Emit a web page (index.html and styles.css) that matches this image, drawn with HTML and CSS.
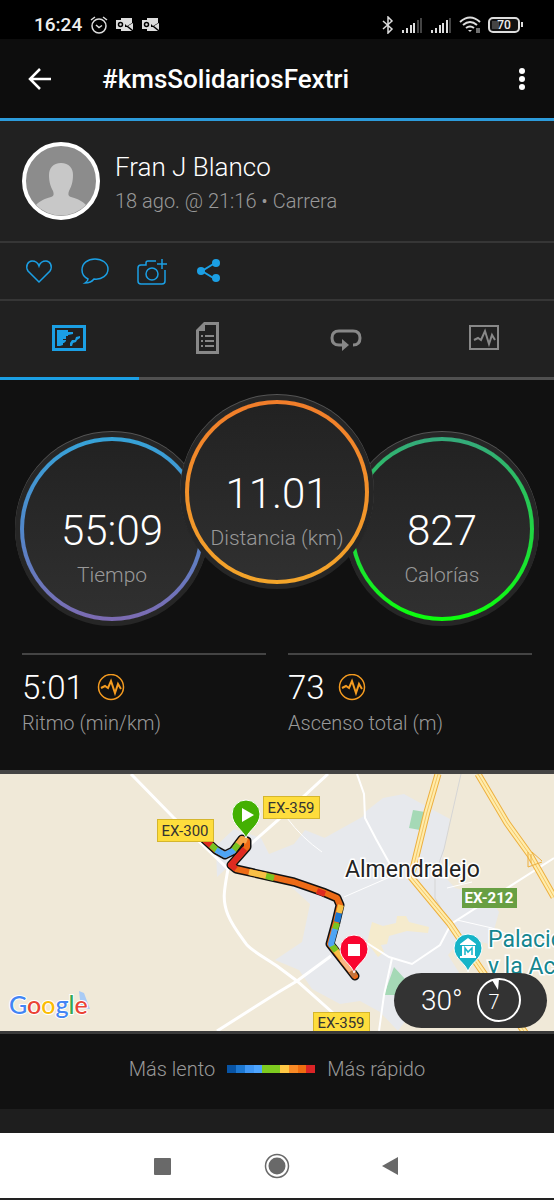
FILE: index.html
```html
<!DOCTYPE html>
<html lang="es">
<head>
    <meta charset="UTF-8">
    <meta name="viewport" content="width=device-width, initial-scale=1.0">
    <title>#kmsSolidariosFextri</title>
    <link rel="stylesheet" href="styles.css">
</head>
<body>
    <!-- Status bar -->
    <div class="status-bar">
        <span class="clock">16:24</span>
        <svg class="alarm" width="18" height="18" viewBox="0 0 18 18" fill="none" stroke="#ddd" stroke-width="1.5">
            <circle cx="9" cy="10" r="7"/>
            <path d="M1 4l4-3M17 4l-4-3M6 9l3 2.500 3-2"/>
        </svg>
        <svg class="mail" width="18" height="14" viewBox="0 0 18 14">
            <path d="M5 0h11v5l-5 3-2-2V3H5zM5 11h4V9l2 0 5 4H5zM12 8l5-3v7z" fill="#ddd"/>
            <path d="M0 2h9v9H0z" fill="#ddd"/>
            <circle cx="4.500" cy="6.500" r="2" fill="none" stroke="#000" stroke-width="1.5"/>
        </svg>
        <svg class="mail" width="18" height="14" viewBox="0 0 18 14">
            <path d="M5 0h11v5l-5 3-2-2V3H5zM5 11h4V9l2 0 5 4H5zM12 8l5-3v7z" fill="#ddd"/>
            <path d="M0 2h9v9H0z" fill="#ddd"/>
            <circle cx="4.500" cy="6.500" r="2" fill="none" stroke="#000" stroke-width="1.5"/>
        </svg>
        <div class="system-icons">
            <svg width="12" height="18" viewBox="0 0 12 18" fill="none" stroke="#ddd" stroke-width="1.5">
                <path d="M1 5l9 8-4 4V1l4 4-9 8"/>
            </svg>
            <svg width="22" height="16" viewBox="0 0 22 16" stroke="#ddd" stroke-width="2">
                <path d="M2 16v-3M6 16v-5M10 16V8M13 16V6"/>
                <path d="M17 16V3M20 16V1" stroke="#444"/>
            </svg>
            <svg width="22" height="16" viewBox="0 0 22 16" stroke="#ddd" stroke-width="2">
                <path d="M2 16v-3M6 16v-5M10 16V8M13 16V6M17 16V3"/>
                <path d="M20 16V1" stroke="#444"/>
            </svg>
            <svg width="22" height="18" viewBox="0 0 22 18" fill="none" stroke="#ddd" stroke-width="2">
                <path d="M1 6q10-9 20 0M4 9q7-6 14 0M7 12q4-3 8 0"/>
                <path d="M9 14h4l-2 2z" fill="#ddd" stroke="none"/>
                <path d="M18 12v5M20 12v5" stroke-width="1"/>
            </svg>
            <svg width="36" height="18" viewBox="0 0 36 18">
                <rect x="1" y="2" width="30" height="14" rx="4" fill="#111" stroke="#ddd" stroke-width="2"/>
                <path d="M4 5h7v8H4z" fill="#444"/>
                <path d="M34 6v5" stroke="#ddd" stroke-width="2"/>
                <text class="battery-text" x="16" y="13" text-anchor="middle">70</text>
            </svg>
        </div>
    </div>

    <!-- Title bar -->
    <header class="app-bar">
        <button class="icon-btn" aria-label="Atrás">
            <svg width="24" height="24" viewBox="0 0 24 24" fill="none" stroke="#fff" stroke-width="2.500">
                <path d="M23 12H2M12 2L2 12l10 10"/>
            </svg>
        </button>
        <h1>#kmsSolidariosFextri</h1>
        <button class="icon-btn" aria-label="Más opciones">
            <svg width="8" height="24" viewBox="0 0 8 24" fill="#fff">
                <circle cx="4" cy="4" r="3"/><circle cx="4" cy="12" r="3"/><circle cx="4" cy="20" r="3"/>
            </svg>
        </button>
    </header>

    <main>
        <section class="profile">
            <svg class="avatar" width="78" height="78" viewBox="0 0 78 78">
                <circle cx="39" cy="39" r="37" fill="#8c8c8c" stroke="#fff" stroke-width="4"/>
                <path d="M39 21c8 0 12 5 12 12 0 8-2 12-4 16-1 3-1 5 2 6 7 2 11 4 15 8a35 35 0 0 1-50 0c4-4 8-6 15-8 3-1 3-3 2-6-2-4-4-8-4-16 0-7 4-12 12-12z" fill="#c8c8c8"/>
            </svg>
            <div>
                <h2>Fran J Blanco</h2>
                <p>18 ago. @ 21:16 • Carrera</p>
            </div>
        </section>

        <div class="actions">
            <button aria-label="Me gusta">
                <svg width="30" height="30" viewBox="0 0 30 30"><path d="M15 26L4 15C1 10 4 5 8 5c4 0 6 2 7 5 1-3 3-5 7-5 4 0 7 5 4 10z"/></svg>
            </button>
            <button aria-label="Comentar">
                <svg width="30" height="30" viewBox="0 0 30 30"><path d="M8 23C4 21 2 18 2 14 2 7 8 3 15 3s13 4 13 10-6 11-14 10q-3 4-9 4 3-2 3-4z"/></svg>
            </button>
            <button aria-label="Añadir foto">
                <svg width="32" height="30" viewBox="0 0 32 30"><path d="M20 5h-8q-2 0-2 2v2H5q-3 0-3 3v13q0 3 3 3h21q3 0 3-3V14M31 8H21M26 3v10"/><circle cx="16" cy="18" r="6"/></svg>
            </button>
            <button aria-label="Compartir">
                <svg width="30" height="30" viewBox="0 0 30 30"><path d="M21 7L8 15l13 8" stroke-width="2"/><g fill="#1b9fe4" stroke="none"><circle cx="22" cy="7" r="4"/><circle cx="7" cy="15" r="4"/><circle cx="22" cy="22" r="4"/></g></svg>
            </button>
        </div>

        <nav class="tabs">
            <button class="active" aria-label="Mapa">
                <svg width="34" height="32" viewBox="0 0 34 32">
                    <path d="M0 2h34v26H0zM3 5v20h28V5z" fill="#1b9fe4" fill-rule="evenodd"/>
                    <path d="M5 7h11v2h5v2l-5 1v1h-2v3h-3v1h3v1l-2 2h-1v2l-3 1H5zM18 23v-3l2-3h3l1-3 4-1v2l-3 2-1 2-3 1-1 3z" fill="#1b9fe4"/>
                </svg>
            </button>
            <button aria-label="Detalles">
                <svg width="24" height="36" viewBox="0 0 24 36">
                    <path d="M8 1h15v32H0V9zM9 4v6H3v20h17V4z" fill="#888" fill-rule="evenodd"/>
                    <path d="M9 3v7H2z" fill="#888"/>
                    <path d="M5 15h2M9 15h9M5 20h2M9 20h9M5 25h2M9 25h9" stroke="#888" stroke-width="2"/>
                </svg>
            </button>
            <button aria-label="Vueltas">
                <svg width="34" height="34" viewBox="0 0 34 34">
                    <path d="M24 23c5 0 7-3 7-7s-2-7-7-7H10c-5 0-7 3-7 7s2 7 7 7h4" fill="none" stroke="#888" stroke-width="3"/>
                    <path d="M13 17l7 6-7 6z" fill="#888"/>
                </svg>
            </button>
            <button aria-label="Gráficos">
                <svg width="32" height="34" viewBox="0 0 32 34" fill="none" stroke="#888">
                    <rect x="1" y="4" width="28" height="23" stroke-width="2"/>
                    <path d="M5 18l4-2 3 2 4-9 4 13 3-9 3 5" stroke-width="2"/>
                </svg>
            </button>
        </nav>

        <section class="gauges">
            <div class="gauge time"><strong>55:09</strong><span>Tiempo</span></div>
            <div class="gauge distance"><strong>11.01</strong><span>Distancia (km)</span></div>
            <div class="gauge calories"><strong>827</strong><span>Calorías</span></div>
        </section>

        <section class="stats">
            <div class="stat">
                <div class="stat-value">
                    <strong>5:01</strong>
                    <svg width="28" height="28" viewBox="0 0 28 28"><circle cx="14" cy="13" r="12.500"/><path d="M4 14l4-2 3 2 3-7 4 12 3-9 3 5" stroke-width="2"/></svg>
                </div>
                <span>Ritmo (min/km)</span>
            </div>
            <div class="stat">
                <div class="stat-value">
                    <strong>73</strong>
                    <svg width="28" height="28" viewBox="0 0 28 28"><circle cx="14" cy="13" r="12.500"/><path d="M4 14l4-2 3 2 3-7 4 12 3-9 3 5" stroke-width="2"/></svg>
                </div>
                <span>Ascenso total (m)</span>
            </div>
        </section>

        <section class="map">
            <svg class="map-canvas" viewBox="0 0 554 257" preserveAspectRatio="xMidYMid slice">
                <rect width="554" height="257" fill="#f0e9d8"/>
                <!-- built-up area -->
                <g fill="#e7e9ed">
                    <path d="M365 38l18-14 21-4 20 11 26 14-10 52 15 17 34 9 10 15-9 32-28-6-14 17 12 19-16 14-20-4-12 28-14 19-18-19-20-11-20 3-28-15-13-19-24-10 27-18 8-38-24-22-26-3-30-14-13 12-1-31 18-17 27 9 8 16 25-10 11-14 20 8 17-2 17-12z"/>
                    <path d="M310 72l54-30 8 55-42 30-28-20z"/>
                    <path d="M332 125l40-35 28 20 10 70-30 8-45-25z"/>
                </g>
                <path d="M372 148l11 4 13-3 1-7h9l3 6 20 5-1 6-21-2-18 5-2 8-6 1 3 7-6 5-6-8-5-5 2-10z" fill="#f5ebcd"/>
                <path d="M413 36l12 2-5 18-11-2zM394 193l11 12-2 16h-19z" fill="#a5d9b6"/>
                <path d="M461 0l-17 75-9 25v24l20 34" fill="none" stroke="#d5d5d5"/>
                <g fill="none" stroke="#fff" stroke-width="3">
                    <path d="M131 0l42 43 32 30 23 22c-4 22-6 31 0 46 5 12 14 23 19 30 8 8 20 14 30 21l20 15 36 32M217 257l60-38 20-12 34-25M328 0l-51 47-32 28"/>
                    <path d="M357 0l7 20 1 24 11 21 15 27M554 84l-103 66-11 21-28 19-23-7-22-14M392 184l-8 37-5 36" stroke-width="2"/>
                    <path d="M287 44q15 20 35 34M344 123l46-20M457 146l35 8 20 8M447 114l25-6" stroke-width="1"/>
                </g>
                <!-- main roads -->
                <g fill="none" stroke-linejoin="round">
                    <path d="M438 0l-11 38-16 65 39 47 30 44 46 66M478 0l29 49 23 32 24 42" stroke="#edaf3e" stroke-width="7"/>
                    <path d="M438 0l-11 38-16 65 39 47 30 44 46 66M478 0l29 49 23 32 24 42" stroke="#ffecab" stroke-width="5"/>
                    <path d="M438 0l-11 38-16 65 39 47 30 44 46 66M478 0l29 49 23 32 24 42" stroke="#f3c566"/>
                    <path d="M528 78v15l14-5M531 80v9M532 78l10 9" stroke="#edaf3e"/>
                </g>
                <!-- route, coloured by pace -->
                <g fill="none" stroke-linejoin="round" stroke-linecap="round">
                    <path d="M204 65l12 11 9 5 8-4 9-12 5 2v6l-16 18 5 4 58 13 29 10 14 6 3 7-4 17-6 22 25 32" stroke="#111" stroke-width="9"/>
                    <path d="M204 65l12 11 9 5 8-4 9-12 5 2v6l-16 18 5 4 58 13 29 10 14 6 3 7-4 17-6 22 25 32" stroke="#ed6b16" stroke-width="6"/>
                    <g stroke-width="6" stroke-linecap="butt">
                        <path d="M204 65l8 7M245 75l-14 16 5 4" stroke="#df2a20"/>
                        <path d="M211 71l7 6M233 77l6-8" stroke="#77c422"/>
                        <path d="M216 76l9 5 8-4 1-1" stroke="#4ea5f5"/>
                        <path d="M238 70l4-5 5 2" stroke="#f5a54a"/>
                        <path d="M317 117l8 3" stroke="#df2a20"/>
                        <path d="M249 98l18 4M341 131l-2 8M334 174l10 13" stroke="#f8c046"/>
                        <path d="M266 102l8 2M337 149l-2 7M331 170l5 7" stroke="#77c422"/>
                        <path d="M339 139l-2 9" stroke="#1d78d2"/>
                        <path d="M335 155l-4 15 1 2" stroke="#4ea5f5"/>
                        <path d="M342 185l12 15" stroke="#f8b783"/>
                        <path d="M351 197l4 5" stroke="#c4753d"/>
                    </g>
                </g>
                <!-- road signs -->
                <g fill="#fedd3c" stroke="#d5b62d">
                    <rect x="157.500" y="45.500" width="56" height="22"/>
                    <rect x="263.500" y="22.500" width="56" height="22"/>
                    <rect x="313.500" y="238.500" width="56" height="22"/>
                </g>
                <rect x="462" y="114" width="55" height="20" fill="#689f43"/>
                <g class="sign" text-anchor="middle">
                    <text x="185" y="62">EX-300</text>
                    <text x="291" y="39">EX-359</text>
                    <text x="341" y="254">EX-359</text>
                    <text class="sign-green" x="489" y="129">EX-212</text>
                </g>
                <text class="city" x="345" y="103">Almendralejo</text>
                <g class="place">
                    <text x="488" y="173">Palacio</text>
                    <text x="488" y="200">y la Aca</text>
                </g>
                <!-- pins -->
                <path d="M246 64c-3-8-14-13-14-24a14 14 0 0 1 28 0c0 11-11 16-14 24z" fill="#43b002" stroke="#fff"/>
                <path d="M242 34l12 7-12 7z" fill="#fff"/>
                <path d="M354 199c-2-9-14-13-14-24a14 14 0 0 1 28 0c0 11-12 15-14 24z" fill="#f9052f" stroke="#fff"/>
                <path d="M348 170h12v12h-12z" fill="#fff"/>
                <path d="M468 198c-2-9-14-13-14-24a14 14 0 0 1 28 0c0 11-12 15-14 24z" fill="#16b4c8" stroke="#fff"/>
                <path d="M460 170l8-6 8 6v1h-16zM462 172h13v10h-13zM460 182h16v2h-16z" fill="#fff"/>
                <path d="M465 181v-7l3 4 4-4v7" fill="none" stroke="#16b4c8" stroke-width="1.5"/>
                <path d="M79 217l5 2 6 16-9-1z" fill="#a9cbf5"/>
                <text class="google" x="9" y="240"><tspan fill="#4285f4">G</tspan><tspan fill="#ea4335">o</tspan><tspan fill="#fbbc05">o</tspan><tspan fill="#4285f4">g</tspan><tspan fill="#34a853">l</tspan><tspan fill="#ea4335">e</tspan></text>
            </svg>
            <div class="weather">
                <span>30°</span>
                <svg width="46" height="46" viewBox="0 0 46 46">
                    <circle cx="23" cy="22" r="21" fill="none" stroke="#fff" stroke-width="2"/>
                    <path d="M16 2l7-1-1 11z" fill="#fff"/>
                    <text x="18" y="31" text-anchor="middle">7</text>
                </svg>
            </div>
        </section>

        <div class="legend">
            <span>Más lento</span>
            <div class="scale">
                <i class="c1"></i><i class="c2"></i><i class="c3"></i><i class="c4"></i><i class="c5"></i>
                <i class="c5"></i><i class="c6"></i><i class="c7"></i><i class="c8"></i><i class="c9"></i>
            </div>
            <span>Más rápido</span>
        </div>
    </main>

    <!-- Android navigation -->
    <footer class="nav-bar">
        <button aria-label="Recientes">
            <svg width="26" height="26" viewBox="0 0 26 26"><rect x="4" y="5" width="17" height="17" rx="1" fill="#696969"/></svg>
        </button>
        <button aria-label="Inicio">
            <svg width="26" height="26" viewBox="0 0 26 26"><circle cx="13" cy="13" r="8.500" fill="#696969"/><circle cx="13" cy="13" r="11.500" fill="none" stroke="#696969" stroke-width="1.500"/></svg>
        </button>
        <button aria-label="Volver">
            <svg width="26" height="26" viewBox="0 0 26 26"><path d="M4 13l16-9v18z" fill="#696969"/></svg>
        </button>
    </footer>
</body>
</html>
```

FILE: styles.css
```css
/* General Styles */
* {
    box-sizing: border-box;
}

body {
    margin: 0;
    font-family: Roboto, sans-serif;
    font-weight: 300;
    background: #111;
    color: #fff;
}

h1, h2, p {
    margin: 0;
}

strong {
    font-weight: 300;
}

svg {
    display: block;
    flex-shrink: 0;
}

button {
    display: flex;
    align-items: center;
    justify-content: center;
    padding: 0;
    border: none;
    background: none;
    cursor: pointer;
}

/* Status bar */
.status-bar {
    display: flex;
    align-items: center;
    gap: 8px;
    height: 39px;
    padding: 10px 30px 0 34px;
    background: #000;
}

.clock {
    font-size: 19px;
    font-weight: 500;
    color: #eee;
}

.system-icons {
    display: flex;
    align-items: center;
    gap: 7px;
    margin-left: auto;
}

.battery-text {
    font-size: 12px;
    font-weight: 500;
    fill: #eee;
}

/* Title bar */
.app-bar {
    display: flex;
    align-items: center;
    height: 82px;
    padding: 0 28px;
    background: #0d0d0d;
    border-bottom: 3px solid #2c9bdb;
}

.app-bar h1 {
    flex: 1;
    margin-left: 50px;
    font-size: 26px;
    font-weight: 500;
}

/* Profile */
.profile {
    display: flex;
    align-items: center;
    gap: 15px;
    height: 122px;
    padding: 0 22px;
    background: #212121;
    border-bottom: 2px solid #363636;
}

.profile h2 {
    margin-top: 3px;
    font-size: 26px;
    line-height: 34px;
    font-weight: 300;
}

.profile p {
    margin-top: 3px;
    font-size: 20px;
    line-height: 28px;
    color: #999;
}

.actions {
    display: flex;
    gap: 26px;
    height: 58px;
    padding: 0 24px;
    background: #212121;
    border-bottom: 2px solid #363636;
}

.actions svg {
    fill: none;
    stroke: #1b9fe4;
    stroke-width: 1.5;
}

/* Tabs */
.tabs {
    display: grid;
    grid-template-columns: repeat(4, 1fr);
    height: 79px;
    background: #212121;
}

.tabs button {
    border-bottom: 3px solid #505050;
}

.tabs .active {
    border-bottom-color: #1b9fe4;
}

/* Gauges */
.gauges {
    display: flex;
    justify-content: center;
    align-items: flex-end;
    padding: 20px 0 32px;
}

.gauge {
    display: flex;
    flex-direction: column;
    align-items: center;
    width: 184px;
    height: 184px;
    padding-top: 64px;
    border: 4px solid transparent;
    border-radius: 50%;
    box-shadow: 0 0 0 5px #262626, 0 -1px 0 5px #555;
}

.gauge strong {
    font-size: 42px;
    line-height: 52px;
}

.gauge span {
    font-size: 21px;
    line-height: 36px;
    color: #999;
    white-space: nowrap;
}

.time {
    background: linear-gradient(#222, #303030) padding-box, linear-gradient(#36a3d8, #5187ca 50%, #7d6bb2) border-box;
}

.distance {
    z-index: 1;
    margin: 0 -19px 37px;
    background: linear-gradient(#222, #303030) padding-box, linear-gradient(#f17d2a, #f3a52a) border-box;
}

.calories {
    background: linear-gradient(#222, #303030) padding-box, linear-gradient(#35aa7c, #0cff0c) border-box;
}

/* Stats */
.stats {
    display: grid;
    grid-template-columns: 1fr 1fr;
    gap: 22px;
    padding: 0 22px 33px;
}

.stat {
    padding-top: 13px;
    border-top: 2px solid #444;
    font-size: 20px;
    line-height: 28px;
    color: #999;
}

.stat-value {
    display: flex;
    align-items: center;
    gap: 13px;
    margin-bottom: 1px;
    font-size: 33px;
    line-height: 40px;
    color: #fff;
}

.stat-value svg {
    fill: none;
    stroke: #f49b20;
    stroke-width: 1.5;
}

/* Map */
.map {
    position: relative;
    border-top: 4px solid #444;
    border-bottom: 3px solid #3a3a3a;
}

.map-canvas {
    width: 100%;
    height: 257px;
}

.sign {
    font-size: 15px;
    font-weight: 400;
    fill: #333;
}

.sign-green {
    font-weight: 700;
    fill: #fff;
}

.city,
.place {
    font-size: 23px;
    font-weight: 400;
    fill: #222;
    stroke: #fff;
    stroke-width: 3px;
    paint-order: stroke;
}

.place {
    fill: #15868f;
}

.google {
    font-family: Lato, sans-serif;
    font-size: 25px;
    font-weight: 500;
    stroke: #fff;
    stroke-width: 2px;
    paint-order: stroke;
}

.weather {
    position: absolute;
    right: 7px;
    bottom: 3px;
    display: flex;
    align-items: center;
    justify-content: space-between;
    width: 153px;
    height: 55px;
    padding: 0 25px 0 27px;
    border-radius: 28px;
    background: #333;
    font-size: 28px;
}

.weather text {
    font-size: 20px;
    fill: #fff;
}

/* Pace legend */
.legend {
    display: flex;
    align-items: center;
    justify-content: center;
    gap: 12px;
    height: 75px;
    padding-bottom: 6px;
    font-size: 20px;
    color: #999;
}

.scale {
    display: flex;
    width: 88px;
    height: 8px;
}

.scale i {
    flex: 1;
}

.c1 { background: #0854a5; }
.c2 { background: #1d78d2; }
.c3 { background: #3f97f5; }
.c4 { background: #4ea5ff; }
.c5 { background: #7ecb20; }
.c6 { background: #ffc845; }
.c7 { background: #f98a25; }
.c8 { background: #ef6d10; }
.c9 { background: #db2426; }

/* Android navigation */
.nav-bar {
    display: flex;
    justify-content: center;
    gap: 88px;
    height: 91px;
    border-top: 24px solid #1e1e1e;
    border-bottom: 2px solid #222;
    background: #fff;
}
```
